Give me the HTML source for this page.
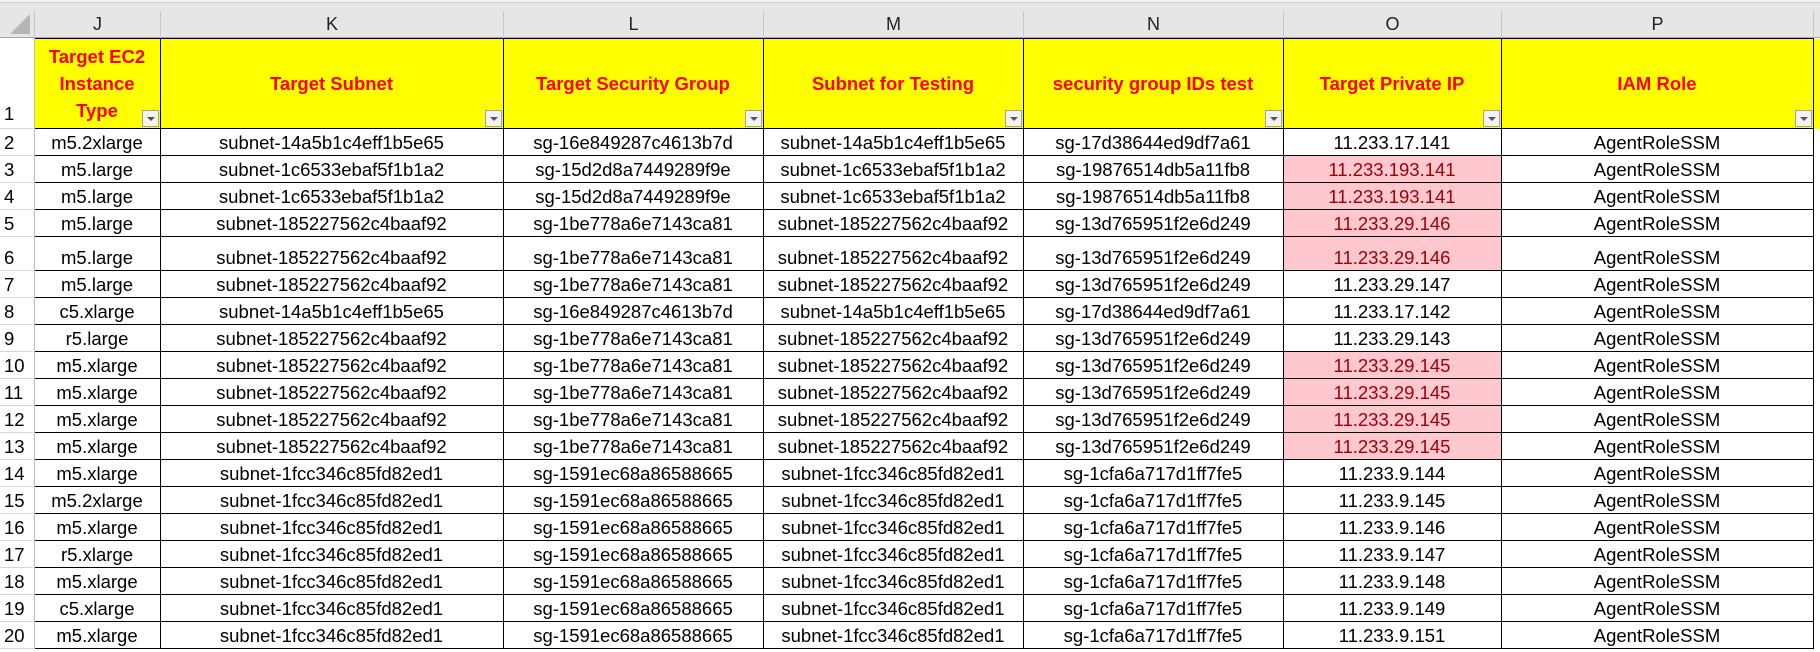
<!DOCTYPE html>
<html><head><meta charset="utf-8"><style>
*{margin:0;padding:0;box-sizing:border-box}
body{width:1820px;height:652px;overflow:hidden;background:#fff;font-family:"Liberation Sans",sans-serif;position:relative}
.top{position:absolute;left:0;top:0;width:1820px;height:38px;background:#e6e6e6;border-bottom:1px solid #a6a6a6}
.top .strip{position:absolute;left:0;top:0;width:1820px;height:3px;background:#f3f3f3;border-bottom:1px solid #cfcfcf}
.ch{position:absolute;top:11px;height:27px;border-left:1px solid #c6c6c6;text-align:center;font-size:18px;line-height:27px;color:#222}
.corner{position:absolute;left:10px;top:14px;width:0;height:0;border-left:20px solid transparent;border-bottom:20px solid #b5b5b5}
table{position:absolute;left:0;top:38px;border-collapse:collapse;table-layout:fixed}
td{border:1px solid #000;text-align:center;vertical-align:bottom;font-size:18.5px;height:27px;padding:0 0 1px 0;white-space:nowrap;overflow:hidden;position:relative;color:#000}
td.rh{border:none;border-right:1px solid #bcbcbc;border-bottom:1px solid #d4d4d4;text-align:left;padding-left:4px;font-size:18.5px}
tr.h td{height:90px;background:#ff0;color:#f00;font-weight:bold;font-size:18.5px;vertical-align:middle;line-height:27px}
tr.h td.rh{background:#fff;color:#000;font-weight:normal;vertical-align:bottom;font-size:18.5px}
tr.t td{height:34px}
td.p{background:#ffc7ce;color:#9c0006}
.fb{position:absolute;right:1px;bottom:1px;width:17px;height:17px;border:1px solid #a0a0a0;background:#f2f2f2}
.fb:after{content:"";position:absolute;left:4px;top:6px;border-left:4px solid transparent;border-right:4px solid transparent;border-top:4px solid #555}
td.e{border:none;border-left:1px solid #000}
</style></head><body>
<div class="top"><div class="strip"></div><div class="corner"></div>
<div class="ch" style="left:34px;width:126px">J</div>
<div class="ch" style="left:160px;width:343px">K</div>
<div class="ch" style="left:503px;width:260px">L</div>
<div class="ch" style="left:763px;width:260px">M</div>
<div class="ch" style="left:1023px;width:260px">N</div>
<div class="ch" style="left:1283px;width:218px">O</div>
<div class="ch" style="left:1501px;width:312px">P</div>
<div class="ch" style="left:1813px;width:7px"></div>
</div>
<table>
<colgroup><col style="width:34px"><col style="width:126px"><col style="width:343px"><col style="width:260px"><col style="width:260px"><col style="width:260px"><col style="width:218px"><col style="width:312px"><col style="width:7px"></colgroup>
<tr class="h"><td class="rh">1</td><td>Target EC2<br>Instance<br>Type<span class="fb"></span></td><td>Target Subnet<span class="fb"></span></td><td>Target Security Group<span class="fb"></span></td><td>Subnet for Testing<span class="fb"></span></td><td>security group IDs test<span class="fb"></span></td><td>Target Private IP<span class="fb"></span></td><td>IAM Role<span class="fb"></span></td><td class="e"></td></tr>
<tr><td class="rh">2</td><td>m5.2xlarge</td><td>subnet-14a5b1c4eff1b5e65</td><td>sg-16e849287c4613b7d</td><td>subnet-14a5b1c4eff1b5e65</td><td>sg-17d38644ed9df7a61</td><td>11.233.17.141</td><td>AgentRoleSSM</td><td class="e"></td></tr>
<tr><td class="rh">3</td><td>m5.large</td><td>subnet-1c6533ebaf5f1b1a2</td><td>sg-15d2d8a7449289f9e</td><td>subnet-1c6533ebaf5f1b1a2</td><td>sg-19876514db5a11fb8</td><td class="p">11.233.193.141</td><td>AgentRoleSSM</td><td class="e"></td></tr>
<tr><td class="rh">4</td><td>m5.large</td><td>subnet-1c6533ebaf5f1b1a2</td><td>sg-15d2d8a7449289f9e</td><td>subnet-1c6533ebaf5f1b1a2</td><td>sg-19876514db5a11fb8</td><td class="p">11.233.193.141</td><td>AgentRoleSSM</td><td class="e"></td></tr>
<tr><td class="rh">5</td><td>m5.large</td><td>subnet-185227562c4baaf92</td><td>sg-1be778a6e7143ca81</td><td>subnet-185227562c4baaf92</td><td>sg-13d765951f2e6d249</td><td class="p">11.233.29.146</td><td>AgentRoleSSM</td><td class="e"></td></tr>
<tr class="t"><td class="rh">6</td><td>m5.large</td><td>subnet-185227562c4baaf92</td><td>sg-1be778a6e7143ca81</td><td>subnet-185227562c4baaf92</td><td>sg-13d765951f2e6d249</td><td class="p">11.233.29.146</td><td>AgentRoleSSM</td><td class="e"></td></tr>
<tr><td class="rh">7</td><td>m5.large</td><td>subnet-185227562c4baaf92</td><td>sg-1be778a6e7143ca81</td><td>subnet-185227562c4baaf92</td><td>sg-13d765951f2e6d249</td><td>11.233.29.147</td><td>AgentRoleSSM</td><td class="e"></td></tr>
<tr><td class="rh">8</td><td>c5.xlarge</td><td>subnet-14a5b1c4eff1b5e65</td><td>sg-16e849287c4613b7d</td><td>subnet-14a5b1c4eff1b5e65</td><td>sg-17d38644ed9df7a61</td><td>11.233.17.142</td><td>AgentRoleSSM</td><td class="e"></td></tr>
<tr><td class="rh">9</td><td>r5.large</td><td>subnet-185227562c4baaf92</td><td>sg-1be778a6e7143ca81</td><td>subnet-185227562c4baaf92</td><td>sg-13d765951f2e6d249</td><td>11.233.29.143</td><td>AgentRoleSSM</td><td class="e"></td></tr>
<tr><td class="rh">10</td><td>m5.xlarge</td><td>subnet-185227562c4baaf92</td><td>sg-1be778a6e7143ca81</td><td>subnet-185227562c4baaf92</td><td>sg-13d765951f2e6d249</td><td class="p">11.233.29.145</td><td>AgentRoleSSM</td><td class="e"></td></tr>
<tr><td class="rh">11</td><td>m5.xlarge</td><td>subnet-185227562c4baaf92</td><td>sg-1be778a6e7143ca81</td><td>subnet-185227562c4baaf92</td><td>sg-13d765951f2e6d249</td><td class="p">11.233.29.145</td><td>AgentRoleSSM</td><td class="e"></td></tr>
<tr><td class="rh">12</td><td>m5.xlarge</td><td>subnet-185227562c4baaf92</td><td>sg-1be778a6e7143ca81</td><td>subnet-185227562c4baaf92</td><td>sg-13d765951f2e6d249</td><td class="p">11.233.29.145</td><td>AgentRoleSSM</td><td class="e"></td></tr>
<tr><td class="rh">13</td><td>m5.xlarge</td><td>subnet-185227562c4baaf92</td><td>sg-1be778a6e7143ca81</td><td>subnet-185227562c4baaf92</td><td>sg-13d765951f2e6d249</td><td class="p">11.233.29.145</td><td>AgentRoleSSM</td><td class="e"></td></tr>
<tr><td class="rh">14</td><td>m5.xlarge</td><td>subnet-1fcc346c85fd82ed1</td><td>sg-1591ec68a86588665</td><td>subnet-1fcc346c85fd82ed1</td><td>sg-1cfa6a717d1ff7fe5</td><td>11.233.9.144</td><td>AgentRoleSSM</td><td class="e"></td></tr>
<tr><td class="rh">15</td><td>m5.2xlarge</td><td>subnet-1fcc346c85fd82ed1</td><td>sg-1591ec68a86588665</td><td>subnet-1fcc346c85fd82ed1</td><td>sg-1cfa6a717d1ff7fe5</td><td>11.233.9.145</td><td>AgentRoleSSM</td><td class="e"></td></tr>
<tr><td class="rh">16</td><td>m5.xlarge</td><td>subnet-1fcc346c85fd82ed1</td><td>sg-1591ec68a86588665</td><td>subnet-1fcc346c85fd82ed1</td><td>sg-1cfa6a717d1ff7fe5</td><td>11.233.9.146</td><td>AgentRoleSSM</td><td class="e"></td></tr>
<tr><td class="rh">17</td><td>r5.xlarge</td><td>subnet-1fcc346c85fd82ed1</td><td>sg-1591ec68a86588665</td><td>subnet-1fcc346c85fd82ed1</td><td>sg-1cfa6a717d1ff7fe5</td><td>11.233.9.147</td><td>AgentRoleSSM</td><td class="e"></td></tr>
<tr><td class="rh">18</td><td>m5.xlarge</td><td>subnet-1fcc346c85fd82ed1</td><td>sg-1591ec68a86588665</td><td>subnet-1fcc346c85fd82ed1</td><td>sg-1cfa6a717d1ff7fe5</td><td>11.233.9.148</td><td>AgentRoleSSM</td><td class="e"></td></tr>
<tr><td class="rh">19</td><td>c5.xlarge</td><td>subnet-1fcc346c85fd82ed1</td><td>sg-1591ec68a86588665</td><td>subnet-1fcc346c85fd82ed1</td><td>sg-1cfa6a717d1ff7fe5</td><td>11.233.9.149</td><td>AgentRoleSSM</td><td class="e"></td></tr>
<tr><td class="rh">20</td><td>m5.xlarge</td><td>subnet-1fcc346c85fd82ed1</td><td>sg-1591ec68a86588665</td><td>subnet-1fcc346c85fd82ed1</td><td>sg-1cfa6a717d1ff7fe5</td><td>11.233.9.151</td><td>AgentRoleSSM</td><td class="e"></td></tr>
</table>
</body></html>
